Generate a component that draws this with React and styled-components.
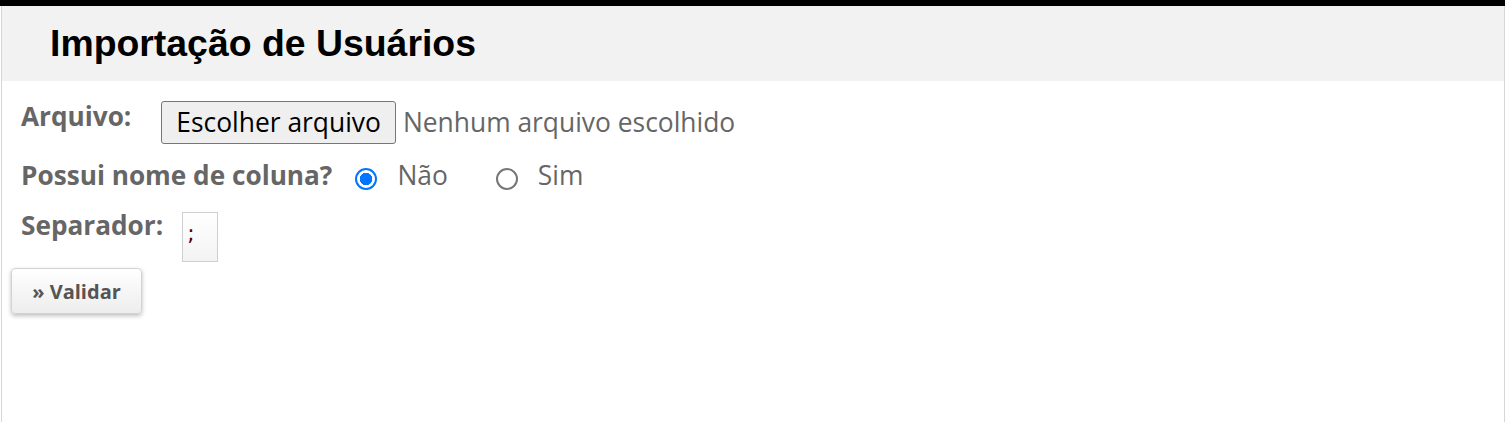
import React from 'react';
import styled, { createGlobalStyle } from 'styled-components';

const GlobalStyle = createGlobalStyle`
  html, body {
    margin: 0;
    padding: 0;
    background: #ffffff;
  }
  body {
    font-family: 'Open Sans', 'Liberation Sans', sans-serif;
  }
`;

const Page = styled.div`
  border-top: 6px solid #000;
  min-height: 416px;
`;

const Panel = styled.div`
  margin-left: 1px;
  border-left: 1px solid #d6d6d6;
  border-right: 1px solid #d6d6d6;
  min-height: 416px;
`;

const Header = styled.div`
  background: #f2f2f2;
  height: 75px;
  padding-left: 48px;
`;

const Title = styled.h1`
  margin: 0;
  font-family: 'Liberation Sans', Arial, sans-serif;
  font-weight: 700;
  font-size: 37.4px;
  line-height: 75px;
  color: #000;
`;

const Form = styled.div`
  padding: 18px 0 0 19px;
  display: flex;
  flex-direction: column;
`;

const Row = styled.div`
  display: flex;
  align-items: ${(p) => p.$align || 'flex-start'};
  margin-top: ${(p) => p.$mt || 0}px;
`;

const Label = styled.label`
  font-weight: 700;
  font-size: 26.2px;
  line-height: 34px;
  color: #666;
  margin-right: ${(p) => p.$gap}px;
`;

const FileButton = styled.button`
  margin-top: 2px;
  height: 43px;
  padding: 0 14px;
  border: 1px solid #767676;
  border-radius: 3px;
  background: #efefef;
  color: #000;
  font-family: 'Open Sans', sans-serif;
  font-size: 26.4px;
  line-height: 41px;
`;

const FileName = styled.span`
  margin-left: 7px;
  margin-top: 2px;
  font-size: 26.4px;
  line-height: 43px;
  color: #666;
`;

const Option = styled.label`
  display: flex;
  align-items: center;
  margin-right: 48px;
  font-size: 26.4px;
  line-height: 34px;
  color: #666;
`;

const Radio = styled.span`
  box-sizing: border-box;
  width: 22px;
  height: 22px;
  margin: 8px 20px 0 0;
  border-radius: 50%;
  border: 2px solid ${(p) => (p.$checked ? '#0075ff' : '#767676')};
  background: ${(p) =>
    p.$checked ? 'radial-gradient(circle, #0075ff 0 6px, #fff 6.5px)' : '#fff'};
`;

const SepInput = styled.div`
  box-sizing: border-box;
  margin-top: 4px;
  width: 36px;
  height: 50px;
  padding: 8px 0 0 4px;
  border: 1px solid #cfcfcf;
  background: linear-gradient(#ffffff, #f3f3f3);
  font-family: 'DejaVu Sans', sans-serif;
  font-size: 22px;
  line-height: 26px;
  color: #5a0000;
`;

const Actions = styled.div`
  padding: 6px 0 0 9px;
`;

const ValidateButton = styled.button`
  width: 131px;
  height: 46px;
  border: 1px solid #d2d2d2;
  border-radius: 4px;
  background: linear-gradient(#ffffff, #ededed);
  box-shadow: 0 2px 4px rgba(0, 0, 0, 0.25);
  font-family: 'Open Sans', sans-serif;
  font-weight: 700;
  font-size: 20px;
  color: #555;
`;

const App = () => {
  return (
    <Page>
      <GlobalStyle />
      <Panel>
        <Header>
          <Title>Importação de Usuários</Title>
        </Header>
        <Form>
          <Row>
            <Label $gap={30}>Arquivo:</Label>
            <FileButton>Escolher arquivo</FileButton>
            <FileName>Nenhum arquivo escolhido</FileName>
          </Row>
          <Row $mt={14} $align="center">
            <Label $gap={23}>Possui nome de coluna?</Label>
            <Option>
              <Radio $checked />
              Não
            </Option>
            <Option>
              <Radio />
              Sim
            </Option>
          </Row>
          <Row $mt={16}>
            <Label $gap={19}>Separador:</Label>
            <SepInput>;</SepInput>
          </Row>
        </Form>
        <Actions>
          <ValidateButton>» Validar</ValidateButton>
        </Actions>
      </Panel>
    </Page>
  );
};

export default App;
